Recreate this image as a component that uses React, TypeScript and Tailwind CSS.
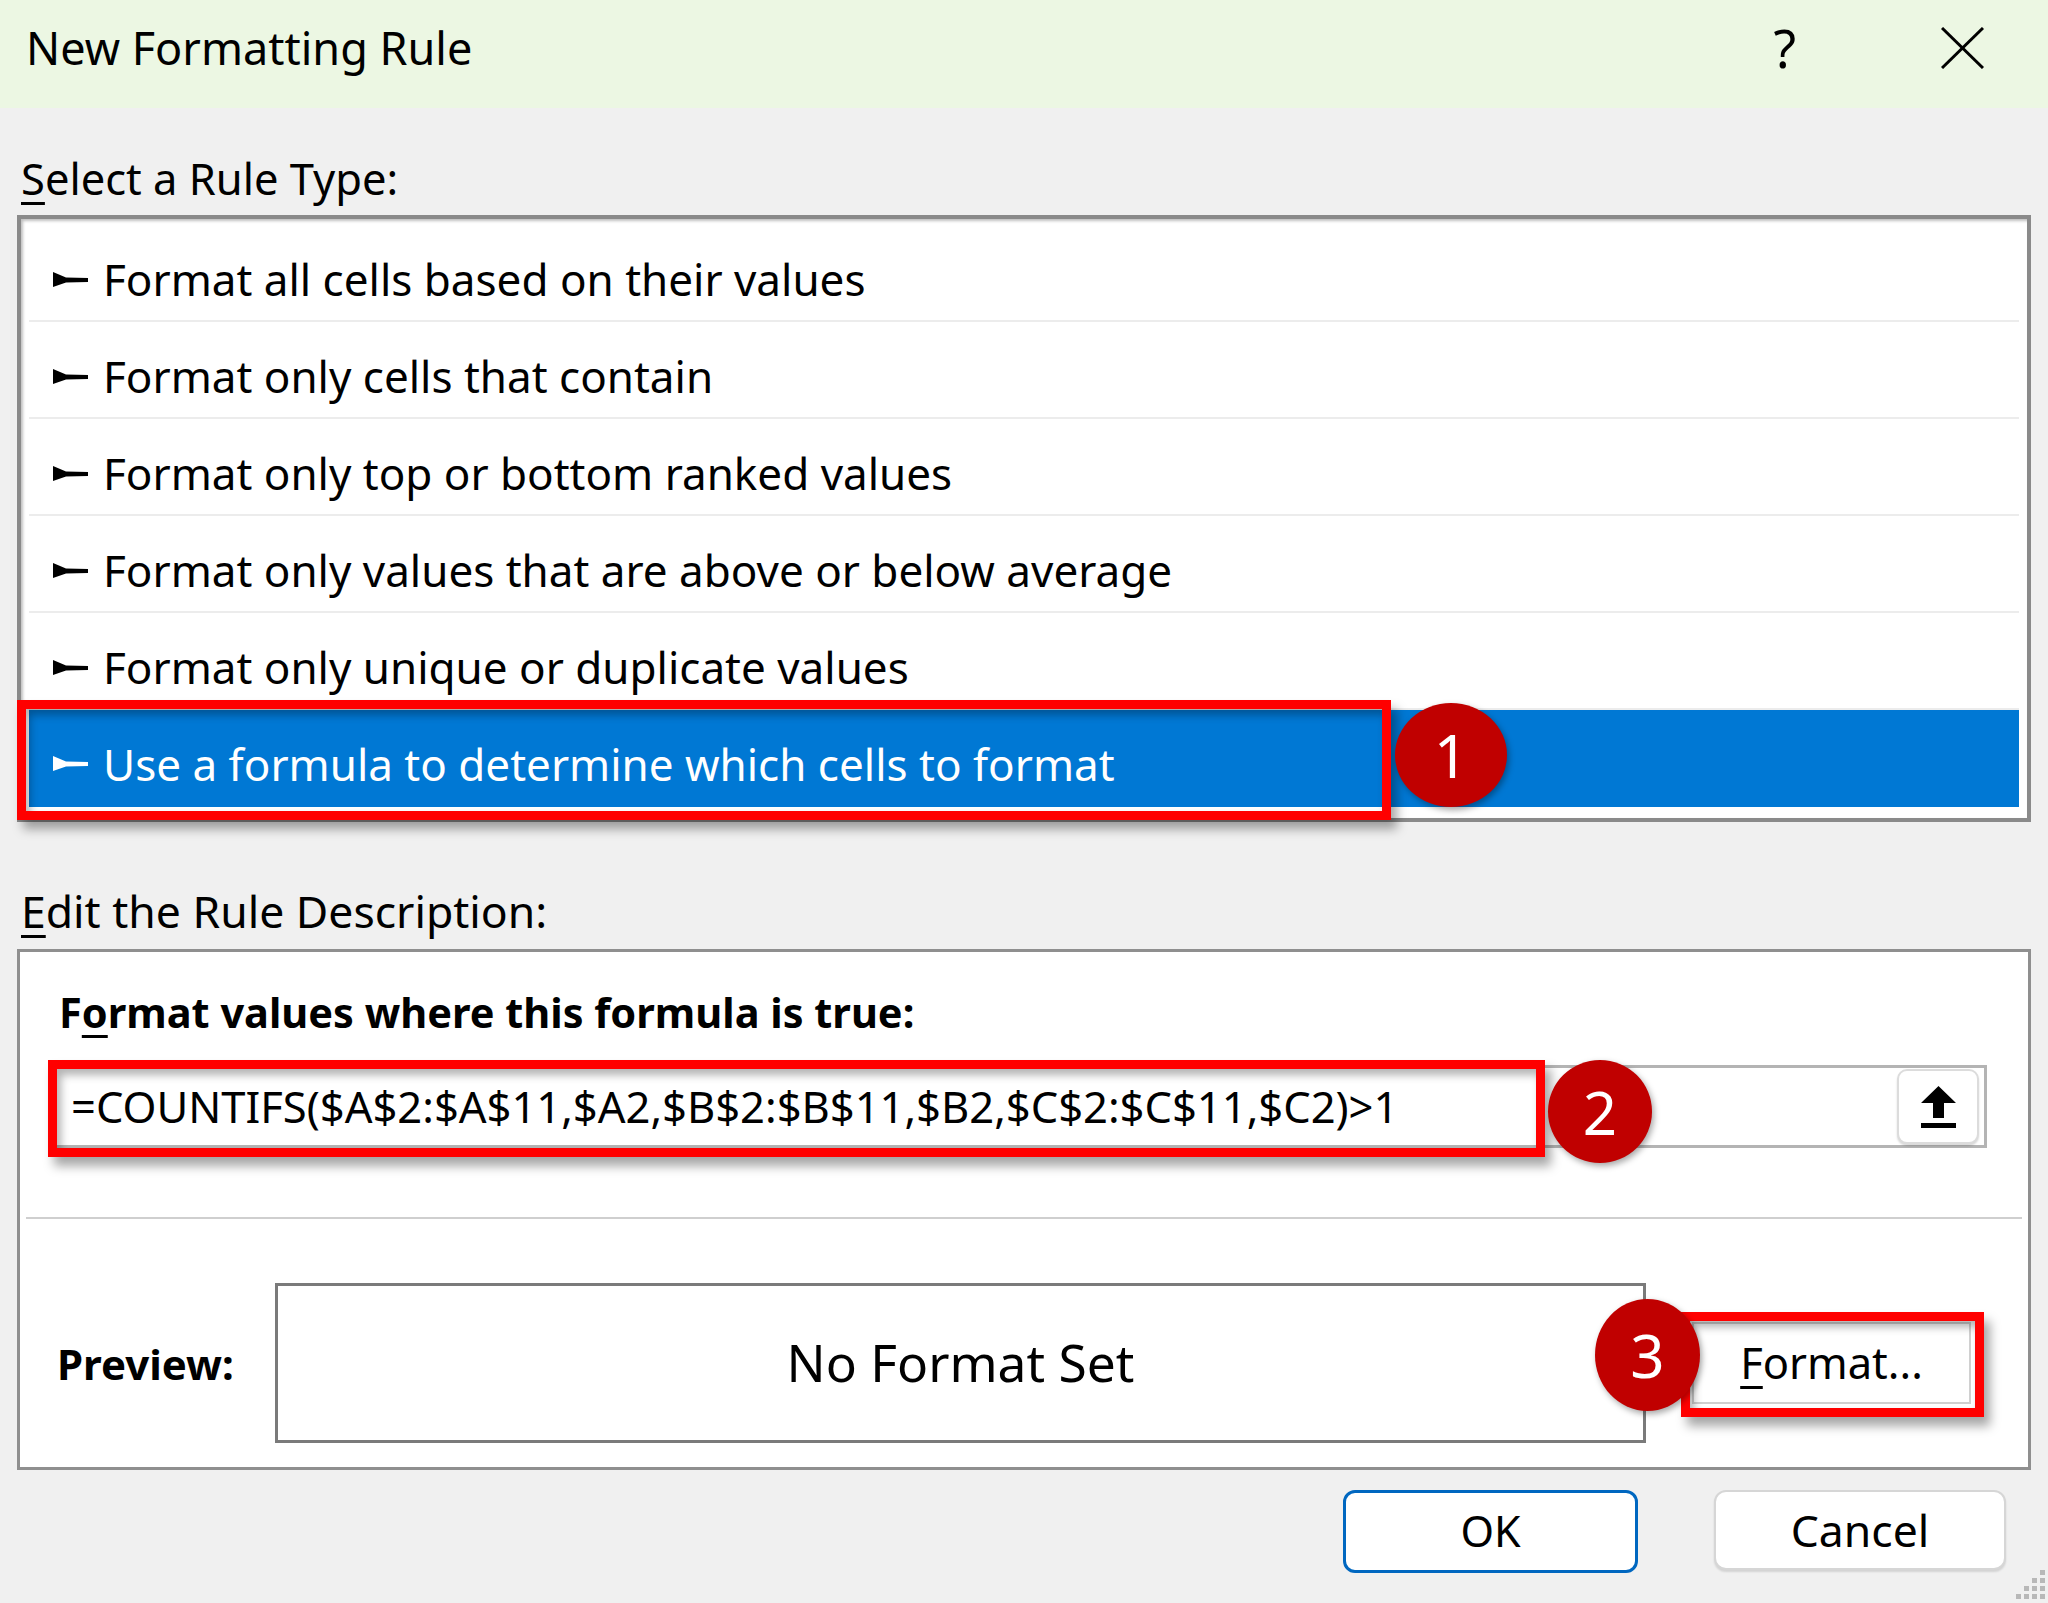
const rules = [
  'Format all cells based on their values',
  'Format only cells that contain',
  'Format only top or bottom ranked values',
  'Format only values that are above or below average',
  'Format only unique or duplicate values',
  'Use a formula to determine which cells to format',
]

function Pointer({ white }: { white?: boolean }) {
  return (
    <svg width="35" height="15" viewBox="0 0 35 15" className={white ? 'fill-white shrink-0' : 'fill-black shrink-0'}>
      <polygon points="0,0 13,5.5 35,6 35,10 13,10.5 0,15" />
    </svg>
  )
}

function Badge({ n, className }: { n: string; className: string }) {
  return (
    <div
      className={`absolute rounded-[50%] bg-[#c00000] flex items-center justify-center text-white text-[60px] leading-none shadow-[2px_3px_6px_rgba(0,0,0,0.35)] ${className}`}
    >
      {n}
    </div>
  )
}

function Mn({ c }: { c: string }) {
  return <span className="underline decoration-[3px] underline-offset-[7px]">{c}</span>
}

export default function App() {
  return (
    <div className="relative w-[2048px] h-[1603px] overflow-hidden bg-[#f0f0f0] font-['Noto_Sans',sans-serif] text-black">
      {/* title bar */}
      <div className="h-[108px] bg-[#ecf7e3] flex items-center pl-[26px] pb-[13px]">
        <span className="text-[45px] leading-[52px]">New Formatting Rule</span>
        <span className="ml-auto text-[52px] leading-none">?</span>
        <svg width="43" height="42" viewBox="0 0 43 42" className="ml-[145px] mr-[64px] stroke-black">
          <line x1="1" y1="1" x2="42" y2="41" strokeWidth="3" />
          <line x1="42" y1="1" x2="1" y2="41" strokeWidth="3" />
        </svg>
      </div>

      <div className="px-[17px]">
        <div className="h-[107px] pt-[46px] pl-[4px] text-[43.5px] leading-[48px]">
          <Mn c="S" />elect a Rule Type:
        </div>

        {/* rule list */}
        <div className="h-[607px] border-[4px] border-[#8a8a8a] bg-white pt-[6px] px-[8px] shadow-[inset_2px_2px_3px_rgba(0,0,0,0.25)]">
          {rules.map((r, i) => {
            const sel = i === rules.length - 1
            return (
              <div
                key={r}
                className={
                  sel
                    ? 'h-[97px] flex items-center gap-[15px] pl-[24px] pt-[10px] bg-[#0078d4] text-white text-[44px]'
                    : 'h-[97px] flex items-center gap-[15px] pl-[24px] pt-[13px] border-b-2 border-[#ececec] text-[44px]'
                }
              >
                <Pointer white={sel} />
                <span>{r}</span>
              </div>
            )
          })}
        </div>

        <div className="h-[127px] pt-[65px] pl-[4px] text-[44.5px] leading-[48px]">
          <Mn c="E" />dit the Rule Description:
        </div>

        {/* description box */}
        <div className="h-[521px] border-[3px] border-[#8f8f8f] bg-white">
          <div className="pt-[36px] pl-[39px] text-[41.5px] leading-[48px] font-bold">
            F<Mn c="o" />rmat values where this formula is true:
          </div>
          <div className="mt-[29px] ml-[34px] mr-[41px] h-[83px] border-[3px] border-[#b4b4b4] flex items-center pl-[14px] pr-[5px]">
            <span className="text-[43.5px] whitespace-nowrap">=COUNTIFS($A$2:$A$11,$A2,$B$2:$B$11,$B2,$C$2:$C$11,$C2)&gt;1</span>
            <div className="ml-auto w-[82px] h-[75px] rounded-[10px] border-2 border-[#dcdcdc] bg-white shadow-[0_2px_2px_rgba(0,0,0,0.15)] flex items-center justify-center">
              <svg width="35" height="42" viewBox="0 0 35 42" className="fill-black">
                <polygon points="17.5,0 35,17 23,17 23,32 12,32 12,17 0,17" />
                <rect x="0" y="37" width="35" height="5" />
              </svg>
            </div>
          </div>
          <div className="mt-[69px] mx-[6px] h-[2px] bg-[#cfcfcf]" />
          <div className="mt-[64px] flex items-center">
            <div className="w-[255px] pl-[37px] text-[42px] font-bold">Preview:</div>
            <div className="w-[1371px] h-[160px] border-[3px] border-[#7a7a7a] flex items-center justify-center text-[51.5px]">
              No Format Set
            </div>
            <div className="ml-[46px] w-[279px] h-[82px] bg-white border-2 border-[#d0d0d0] flex items-center justify-center text-[43.5px]">
              <Mn c="F" />ormat...
            </div>
          </div>
        </div>

        <div className="mt-[20px] flex justify-end gap-[76px] pr-[25px]">
          <div className="w-[295px] h-[83px] rounded-[12px] border-[3px] border-[#0067c0] bg-white flex items-center justify-center text-[43px]">
            OK
          </div>
          <div className="w-[292px] h-[80px] rounded-[12px] border-2 border-[#d6d6d6] bg-white shadow-[0_2px_2px_rgba(0,0,0,0.12)] flex items-center justify-center text-[44.5px]">
            Cancel
          </div>
        </div>
      </div>

      {/* annotations */}
      <div className="absolute left-[17px] top-[700px] w-[1374px] h-[120px] border-[9px] border-[#ff0000] shadow-[6px_9px_10px_rgba(0,0,0,0.35),inset_4px_6px_8px_rgba(0,0,0,0.3)]" />
      <div className="absolute left-[48px] top-[1060px] w-[1497px] h-[97px] border-[9px] border-[#ff0000] shadow-[6px_9px_10px_rgba(0,0,0,0.35),inset_4px_6px_8px_rgba(0,0,0,0.3)]" />
      <div className="absolute left-[1681px] top-[1312px] w-[303px] h-[105px] border-[9px] border-[#ff0000] shadow-[6px_9px_10px_rgba(0,0,0,0.35),inset_4px_6px_8px_rgba(0,0,0,0.3)]" />
      <Badge n="1" className="left-[1395px] top-[703px] w-[112px] h-[104px]" />
      <Badge n="2" className="left-[1548px] top-[1060px] w-[104px] h-[103px]" />
      <Badge n="3" className="left-[1595px] top-[1299px] w-[105px] h-[112px]" />

      {/* resize grip */}
      <svg width="30" height="30" viewBox="0 0 30 30" className="absolute right-[2px] bottom-[3px] fill-[#b8b8b8]">
        <rect x="24" y="0" width="5" height="5" />
        <rect x="16" y="8" width="5" height="5" />
        <rect x="24" y="8" width="5" height="5" />
        <rect x="8" y="16" width="5" height="5" />
        <rect x="16" y="16" width="5" height="5" />
        <rect x="24" y="16" width="5" height="5" />
        <rect x="0" y="24" width="5" height="5" />
        <rect x="8" y="24" width="5" height="5" />
        <rect x="16" y="24" width="5" height="5" />
        <rect x="24" y="24" width="5" height="5" />
      </svg>
    </div>
  )
}
